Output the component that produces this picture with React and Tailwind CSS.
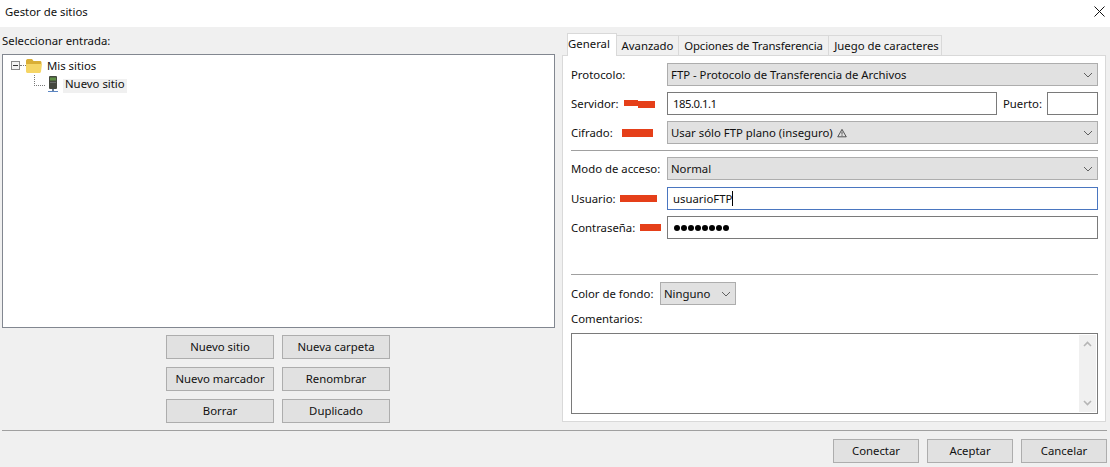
import React from "react";

function Chevron() {
  return (
    <svg width="10" height="6" viewBox="0 0 10 6">
      <path d="M1 1l4 4 4-4" fill="none" stroke="#606060" strokeWidth="1" />
    </svg>
  );
}

function Select({ children, className = "" }) {
  return (
    <div className={`flex h-[23px] items-center justify-between border border-[#adadad] bg-[#e1e1e1] pl-[3px] pr-[4px] text-[#111] ${className}`}>
      <span className="flex items-center gap-[4px] whitespace-nowrap">{children}</span>
      <Chevron />
    </div>
  );
}

function Input({ children, className = "", focus = false }) {
  return (
    <div className={`flex h-[23px] items-center border bg-white pl-[5px] text-[#111] ${focus ? "border-[#4a76c0]" : "border-[#7a7a7a]"} ${className}`}>
      {children}
    </div>
  );
}

function Btn({ children, className = "" }) {
  return (
    <div className={`flex h-[24px] items-center justify-center border border-[#adadad] bg-[#e1e1e1] text-[#111] ${className}`}>
      {children}
    </div>
  );
}

function Row({ label, labelW = "", mark, children, className = "" }) {
  return (
    <div className={`flex items-center ${className}`}>
      <div className="flex w-[96px] shrink-0 items-center text-[#111]">
        <span className={`whitespace-nowrap ${labelW}`}>{label}</span>
        {mark}
      </div>
      <div className="flex min-w-0 flex-1 items-center">{children}</div>
    </div>
  );
}

function Folder() {
  return (
    <svg width="16" height="14" viewBox="0 0 16 14" className="shrink-0">
      <path d="M0 2C0 1 .6 0 1.6 0H6l1.5 2H14c1 0 1.5.6 1.5 1.5V5H0z" fill="#d9ae35" />
      <path d="M0 5H16L15 12.5C14.9 13.4 14.3 14 13.5 14H1.5C.7 14 .1 13.4 0 12.5z" fill="#f5d565" />
    </svg>
  );
}

function Server() {
  return (
    <svg width="12" height="17" viewBox="0 0 12 17" className="shrink-0">
      <rect x="2" y="0" width="8" height="13" rx="1" fill="#45483f" />
      <rect x="3" y="1.5" width="6" height="3" fill="#5f8f45" />
      <rect x="3" y="6" width="6" height="1" fill="#6b6e6b" />
      <rect x="5" y="13" width="2" height="2" fill="#6b7f99" />
      <rect x="1" y="15" width="10" height="1" fill="#5b86c4" />
    </svg>
  );
}

const tabBase = "flex h-[20px] items-center justify-center whitespace-nowrap border border-b-0 border-l-0 border-[#d9d9d9]";

export default function App() {
  return (
    <div className="flex h-[467px] w-[1110px] flex-col overflow-hidden bg-[#f0f0f0] text-[11.35px] leading-[16px] [font-family:'Noto_Sans','Open_Sans',sans-serif]">
      <div className="flex h-[27px] shrink-0 items-start justify-between bg-white pl-[5px] pr-[5px] pt-[4px] text-[#111]">
        <span>Gestor de sitios</span>
        <svg width="11" height="11" viewBox="0 0 11 11" className="mt-[2px]">
          <path d="M0.5 0.5l10 10M10.5 0.5l-10 10" stroke="#111" strokeWidth="1" fill="none" />
        </svg>
      </div>

      <div className="flex min-h-0 flex-1 pl-[2px] pr-[4px] pt-[6px]">
        <div className="flex w-[553px] shrink-0 flex-col">
          <div className="h-[21px] text-[#111]">Seleccionar entrada:</div>
          <div className="h-[274px] border border-[#828790] bg-white pl-[8px] pt-px text-[#111]">
            <div className="flex h-[19px] items-center">
              <span className="flex h-[9px] w-[9px] shrink-0 items-center justify-center border border-[#8a8a8a] bg-[#f4f4f4]">
                <span className="block h-px w-[5px] bg-[#333]" />
              </span>
              <span className="w-[6px] border-t border-dotted border-[#777]" />
              <Folder />
              <span className="ml-[5px]">Mis sitios</span>
            </div>
            <div className="flex h-[19px] items-start pl-[23px]">
              <span className="h-[11px] w-[11px] shrink-0 border-b border-l border-dotted border-[#777]" />
              <span className="ml-[2px] mt-px flex"><Server /></span>
              <span className="ml-[4px] mt-[4px] h-[14px] w-[64px] bg-[#f0f0f0] pl-[2px] leading-[10px]">Nuevo sitio</span>
            </div>
          </div>
          <div className="mt-[7px] grid grid-cols-[108px_108px] justify-start gap-[8px] pl-[164px]">
            <Btn>Nuevo sitio</Btn>
            <Btn>Nueva carpeta</Btn>
            <Btn>Nuevo marcador</Btn>
            <Btn>Renombrar</Btn>
            <Btn>Borrar</Btn>
            <Btn>Duplicado</Btn>
          </div>
        </div>

        <div className="ml-[7px] flex min-w-0 flex-1 flex-col">
          <div className="flex h-[22px] items-end pl-[5px] text-[#111]">
            <div className="relative z-10 -mb-px flex h-[23px] w-[50px] items-center justify-center border border-b-0 border-[#d9d9d9] bg-white pb-[3px] pr-[6px]">General</div>
            <div className={`${tabBase} w-[62px]`}>Avanzado</div>
            <div className={`${tabBase} w-[150px] tracking-[-0.1px]`}>Opciones de Transferencia</div>
            <div className={`${tabBase} w-[113px] pl-[3px]`}>Juego de caracteres</div>
          </div>
          <div className="h-[367px] border border-[#d9d9d9] bg-white pl-[8px] pr-[7px] pt-[7px]">
            <Row label="Protocolo:">
              <Select className="w-full">FTP - Protocolo de Transferencia de Archivos</Select>
            </Row>
            <Row
              label="Servidor:"
              labelW="w-[53px]"
              mark={
                <span className="flex">
                  <span className="block h-[6px] w-[14px] bg-[#e53f19]" />
                  <span className="mt-px block h-[7px] w-[17px] bg-[#e53f19]" />
                </span>
              }
              className="mt-[6px]"
            >
              <Input className="w-[330px]"><span className="tracking-[-0.5px]">185.0.1.1</span></Input>
              <span className="ml-[6px] w-[44px] text-[#111]">Puerto:</span>
              <Input className="w-[51px]" />
            </Row>
            <Row
              label="Cifrado:"
              labelW="w-[51px]"
              mark={<span className="block h-[8px] w-[31px] bg-[#e53f19]" />}
              className="mt-[6px]"
            >
              <Select className="w-full">
                Usar sólo FTP plano (inseguro)
                <svg width="10" height="10" viewBox="0 0 11 10">
                  <path d="M5.5 1L10.2 9.2H0.8z M5.5 3.5V6.8 M5.5 7.5V8.4" fill="none" stroke="#333" strokeWidth="0.9" />
                </svg>
              </Select>
            </Row>
            <div className="mt-[6px] h-px bg-[#a0a0a0]" />
            <Row label="Modo de acceso:" className="mt-[6px]">
              <Select className="w-full">Normal</Select>
            </Row>
            <Row
              label="Usuario:"
              labelW="w-[49px]"
              mark={<span className="block h-[7px] w-[37px] bg-[#e53f19]" />}
              className="mt-[7px]"
            >
              <Input className="w-full" focus>
                usuarioFTP<span className="h-[15px] w-px bg-black" />
              </Input>
            </Row>
            <Row
              label="Contraseña:"
              labelW="w-[69px]"
              mark={<span className="block h-[7px] w-[21px] bg-[#e53f19]" />}
              className="mt-[6px]"
            >
              <Input className="w-full">
                <span className="ml-px flex gap-px">
                  {[0, 1, 2, 3, 4, 5, 6, 7].map((i) => (
                    <span key={i} className="h-[6px] w-[6px] rounded-full bg-black" />
                  ))}
                </span>
              </Input>
            </Row>
            <div className="mt-[35px] h-px bg-[#a0a0a0]" />
            <div className="mt-[7px] flex items-center text-[#111]">
              <span className="w-[89px]">Color de fondo:</span>
              <Select className="w-[76px]">Ninguno</Select>
            </div>
            <div className="mt-[6px] h-[16px] text-[#111]">Comentarios:</div>
            <div className="mt-[6px] flex h-[81px] justify-end border border-[#7a7a7a] bg-white p-px">
              <div className="flex w-[17px] flex-col items-center justify-between bg-[#f0f0f0] py-[6px]">
                <svg width="9" height="6" viewBox="0 0 9 6"><path d="M1 5l3.5-3.5L8 5" fill="none" stroke="#b5b5b5" strokeWidth="1.6" /></svg>
                <svg width="9" height="6" viewBox="0 0 9 6"><path d="M1 1l3.5 3.5L8 1" fill="none" stroke="#b5b5b5" strokeWidth="1.6" /></svg>
              </div>
            </div>
          </div>
        </div>
      </div>

      <div className="mx-[2px] mb-[8px] h-px w-[1105px] shrink-0 bg-[#a0a0a0]" />
      <div className="flex h-[28px] shrink-0 items-start justify-end gap-[8px] pr-[3px]">
        <Btn className="w-[86px]">Conectar</Btn>
        <Btn className="w-[86px]">Aceptar</Btn>
        <Btn className="w-[86px]">Cancelar</Btn>
      </div>
    </div>
  );
}
